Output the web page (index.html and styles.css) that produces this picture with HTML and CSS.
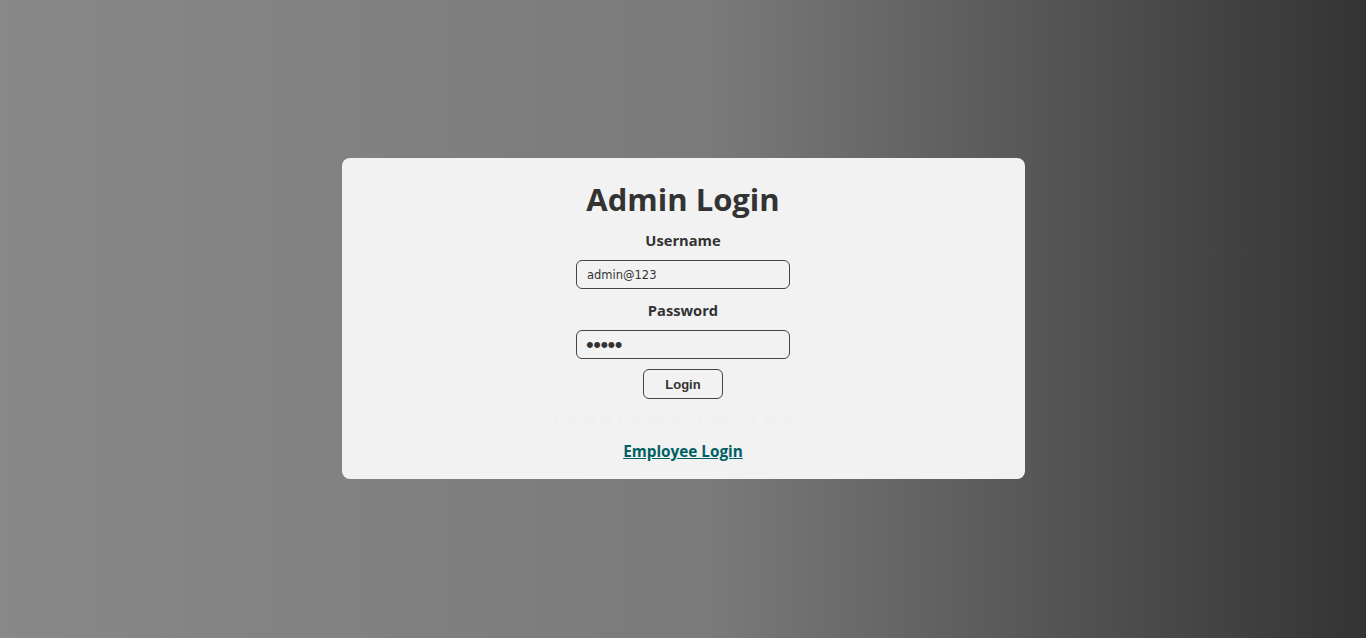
FILE: index.html
```html
<!DOCTYPE html>
<html lang="en">
<head>
<meta charset="utf-8">
<title>Admin Login</title>
<link rel="stylesheet" href="styles.css">
</head>
<body>
<main class="page">
  <form class="card">
    <h1 class="title">Admin Login</h1>
    <label class="label" for="user">Username</label>
    <input class="field" id="user" type="text" value="admin@123">
    <label class="label label-pass" for="pass">Password</label>
    <input class="field field-pass" id="pass" type="password" value="admin">
    <button class="btn" type="button">Login</button>
    <p class="error">Email &amp; Password Doesn't Match</p>
    <a class="link" href="#">Employee Login</a>
  </form>
</main>
</body>
</html>
```

FILE: styles.css
```css
html, body {
  margin: 0;
  height: 100%;
}
body {
  background: linear-gradient(to right, #888888 0%, #7a7a7a 52%, #333333 100%);
  font-family: "Open Sans", "Noto Sans", sans-serif;
  color: #333;
}
.page {
  height: 100%;
  display: flex;
  align-items: center;
  justify-content: center;
}
.card {
  width: 683px;
  height: 321px;
  margin-bottom: 1px;
  box-sizing: border-box;
  background: #f2f2f2;
  border-radius: 8px;
  padding: 20px 0 18px;
  display: flex;
  flex-direction: column;
  align-items: center;
}
.title {
  margin: 0;
  font-size: 31px;
  line-height: 42px;
  font-weight: 700;
  color: #333;
}
.label {
  margin-top: 10px;
  font-size: 14.7px;
  line-height: 20px;
  font-weight: 700;
  color: #333;
}
.label-pass {
  margin-top: 11px;
}
.field {
  margin-top: 10px;
  width: 214px;
  height: 29px;
  box-sizing: border-box;
  border: 1px solid #444;
  border-radius: 6px;
  background: #f2f2f2;
  padding: 0 10px;
  font-family: "DejaVu Sans", sans-serif;
  font-size: 11.5px;
  color: #333;
  outline: none;
}
.field-pass {
  font-family: "Liberation Sans", Arial, sans-serif;
  font-size: 22px;
  letter-spacing: -0.5px;
  padding-left: 9px;
}
.btn {
  margin-top: 10px;
  width: 80px;
  height: 30px;
  border: 1px solid #444;
  border-radius: 6px;
  background: #f2f2f2;
  font-family: "Liberation Sans", Arial, sans-serif;
  font-weight: 700;
  font-size: 13px;
  color: #333;
  padding: 0;
}
.error {
  margin: 10px 0 0;
  font-size: 16px;
  line-height: 22px;
  font-weight: 700;
  color: #f0f0f0;
}
.link {
  margin-top: 10px;
  font-size: 15.3px;
  line-height: 20px;
  font-weight: 700;
  color: #006064;
  text-decoration: underline;
}
```
